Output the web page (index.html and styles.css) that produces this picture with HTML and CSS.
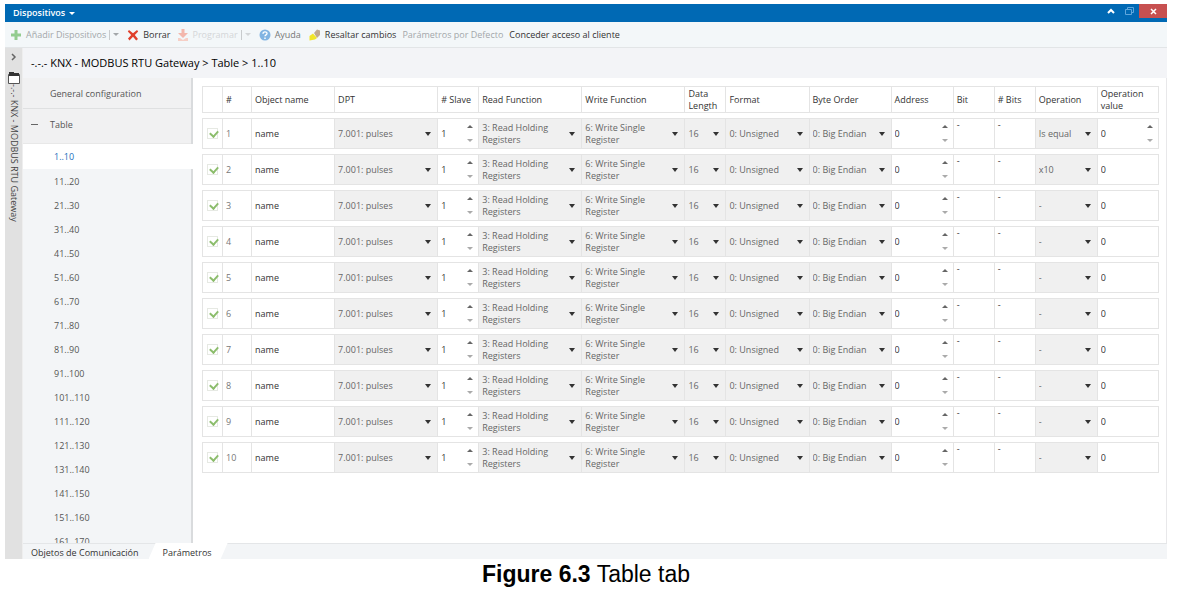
FILE: index.html
```
<!DOCTYPE html>
<html lang="es">
<head>
    <meta charset="UTF-8">
    <meta name="viewport" content="width=device-width, initial-scale=1.0">
    <title>KNX - MODBUS RTU Gateway</title>
    <link rel="stylesheet" href="styles.css">
</head>
<body>
    <figure class="figure">
        <div class="window">
            <header class="titlebar">
                <button class="title-menu">Dispositivos <span class="caret"></span></button>
                <div class="window-buttons">
                    <button aria-label="Contraer">
                        <svg width="8" height="6" viewBox="0 0 8 6"><path d="M1 5 L4 2 L7 5" fill="none" stroke="#fff" stroke-width="2"/></svg>
                    </button>
                    <button aria-label="Restaurar">
                        <svg width="9" height="8" viewBox="0 0 9 8"><path d="M2.5 2V.5h6v5H7M.5 2.5h6v5h-6z" fill="none" stroke="#5fa6dc"/></svg>
                    </button>
                    <button class="close" aria-label="Cerrar">
                        <svg width="7" height="7" viewBox="0 0 7 7"><path d="M1 1l5 5M6 1L1 6" stroke="#fff" stroke-width="1.5"/></svg>
                    </button>
                </div>
            </header>

            <div class="toolbar">
                <button class="tool add" disabled>
                    <svg width="12" height="12" viewBox="0 0 12 12"><path d="M4.5 1h3v3.500H11v3H7.500V11h-3V7.500H1v-3h3.500z" fill="#93cc8f"/></svg>
                    Añadir Dispositivos
                </button>
                <button class="tool-more" aria-label="Más opciones de añadir" disabled><span class="caret"></span></button>
                <button class="tool delete">
                    <svg width="12" height="12" viewBox="0 0 12 12"><path d="M2 1l4 3.200L10 1l1.200 1.500L7.800 6l3.200 4-1.800 1.400L6 7.800l-3.500 3.600L1 9.500 4.200 6 .8 2.500z" fill="#e0402c"/></svg>
                    Borrar
                </button>
                <button class="tool program" disabled>
                    <svg width="12" height="12" viewBox="0 0 12 12"><path d="M4.500 0h3v4H11L6 9 1 4h3.500z" fill="#f3b7ac"/><path d="M1 9h2l3 2 3-2h2v3H1z" fill="#f6cfc6"/></svg>
                    Programar
                </button>
                <button class="tool-more faint" aria-label="Más opciones de programar" disabled><span class="caret"></span></button>
                <button class="tool help">
                    <svg width="12" height="12" viewBox="0 0 12 12"><circle cx="6" cy="6" r="5.500" fill="#82b4e2"/><path d="M4 4.800C4 2.300 8 2.300 8 4.500 8 6 6 5.800 6 7.300M6 8.500v1.400" fill="none" stroke="#fff" stroke-width="1.400"/></svg>
                    Ayuda
                </button>
                <button class="tool highlight">
                    <svg width="12" height="12" viewBox="0 0 12 12"><path d="M5 4l3-3.500 3 1V6L8 9z" fill="#c0a98f"/><path d="M4 4.500L8 9l-2 1.500L.5 11.500V7z" fill="#f1e529"/></svg>
                    Resaltar cambios
                </button>
                <button class="tool defaults" disabled>Parámetros por Defecto</button>
                <button class="tool">Conceder acceso al cliente</button>
            </div>

            <div class="workspace">
                <aside class="rail">
                    <button class="expand" aria-label="Expandir">
                        <svg width="6" height="8" viewBox="0 0 6 8"><path d="M1 1l3 3-3 3" fill="none" stroke="#666" stroke-width="1.500"/></svg>
                    </button>
                    <svg class="device" width="12" height="12" viewBox="0 0 12 12"><path d="M.5 2.500h11v9H.5z" fill="#fff" stroke="#555"/><path d="M1 0h5v1h5v3H1z" fill="#333"/></svg>
                    <span class="rail-text">-.-.- KNX - MODBUS RTU Gateway</span>
                </aside>

                <main class="editor">
                    <h1 class="crumbs">-.-.- KNX - MODBUS RTU Gateway &gt; Table &gt; 1..10</h1>

                    <div class="panes">
                        <nav class="sidebar">
                            <a class="section" href="#general">General configuration</a>
                            <a class="section open" href="#table">Table</a>
                            <ul class="pages" id="pages"></ul>
                        </nav>

                        <section class="params">
                            <table>
                                <colgroup>
                                    <col class="w20"><col class="w29"><col class="w83"><col class="w103"><col class="w41">
                                    <col class="w103"><col class="w103"><col class="w41"><col class="w83"><col class="w82">
                                    <col class="w62"><col class="w41"><col class="w41"><col class="w62"><col class="w62">
                                </colgroup>
                                <thead>
                                    <tr>
                                        <th></th>
                                        <th>#</th>
                                        <th>Object name</th>
                                        <th>DPT</th>
                                        <th># Slave</th>
                                        <th>Read Function</th>
                                        <th>Write Function</th>
                                        <th>Data Length</th>
                                        <th>Format</th>
                                        <th>Byte Order</th>
                                        <th>Address</th>
                                        <th>Bit</th>
                                        <th># Bits</th>
                                        <th>Operation</th>
                                        <th>Operation value</th>
                                    </tr>
                                </thead>
                                <tbody id="rows"></tbody>
                            </table>
                        </section>
                    </div>

                    <footer class="tabs">
                        <a href="#objetos">Objetos de Comunicación</a>
                        <a class="active" href="#parametros">Parámetros</a>
                    </footer>
                </main>
            </div>
        </div>
        <figcaption><b>Figure 6.3</b> Table tab</figcaption>
    </figure>

    <script src="script.js"></script>
</body>
</html>
```
FILE: styles.css
```
* {
    margin: 0;
    padding: 0;
    box-sizing: border-box;
}

body {
    font-family: "Open Sans", "Noto Sans", sans-serif;
    font-size: 9px;
    line-height: 12px;
    color: #333;
    background: #fff;
}

button, input, select {
    font: inherit;
    color: inherit;
    background: none;
    border: 0;
    border-radius: 0;
    outline: 0;
}

a {
    color: inherit;
    text-decoration: none;
}

.figure {
    height: 100vh;
    padding: 4px 12px 10px 5px;
    display: flex;
    flex-direction: column;
}

.window {
    flex: 1;
    min-height: 0;
    display: flex;
    flex-direction: column;
}

figcaption {
    font-family: "Liberation Sans", Arial, sans-serif;
    font-size: 23px;
    line-height: 30px;
    color: #000;
    text-align: center;
}

.caret {
    display: inline-block;
    border: 3px solid transparent;
    border-top-color: currentColor;
    border-bottom: 0;
}

/* title bar */
.titlebar {
    height: 18px;
    display: flex;
    justify-content: space-between;
    background: #0069b4;
    color: #fff;
}

.title-menu {
    padding-left: 8px;
    display: flex;
    align-items: center;
    gap: 4px;
    font-weight: 600;
}

.window-buttons {
    display: flex;
    align-items: flex-start;
}

.window-buttons button {
    width: 19px;
    height: 14px;
    display: flex;
    align-items: center;
    justify-content: center;
}

.window-buttons .close {
    width: 28px;
    background: #c75050;
}

/* toolbar */
.toolbar {
    height: 26px;
    padding-left: 5px;
    display: flex;
    align-items: center;
    background: #f3f7f9;
    border-bottom: 1px solid #e2e5e7;
}

.tool {
    display: flex;
    align-items: center;
    gap: 4px;
    margin-right: 6px;
    white-space: nowrap;
}

.tool:disabled,
.tool-more:disabled {
    color: #a3a7aa;
}

.tool.program:disabled,
.tool-more.faint {
    color: #d3d6d8;
}

.tool.add,
.tool.program {
    margin-right: 3px;
}

.tool.help {
    color: #777;
    margin-right: 8px;
}

.tool-more {
    height: 10px;
    padding-left: 3px;
    margin-right: 8px;
    display: flex;
    align-items: center;
    border-left: 1px solid #c8cbcd;
}

.workspace {
    flex: 1;
    min-height: 0;
    display: flex;
}

/* collapsed device rail */
.rail {
    width: 17px;
    display: flex;
    flex-direction: column;
    align-items: center;
    background: #e1e1e1;
}

.expand {
    height: 24px;
    padding-bottom: 4px;
}

.device {
    flex: none;
}

.rail-text {
    writing-mode: vertical-rl;
    color: #444;
    white-space: nowrap;
}

.editor {
    flex: 1;
    min-width: 0;
    display: flex;
    flex-direction: column;
    border-left: 1px solid #eee;
}

.crumbs {
    padding: 8px;
    font-size: 11px;
    line-height: 14px;
    font-weight: 500;
    color: #000;
    background: #f3f4f7;
    white-space: nowrap;
}

.panes {
    flex: 1;
    min-height: 0;
    display: flex;
    border-right: 1px solid #e8e8ea;
}

/* page list */
.sidebar {
    width: 170px;
    overflow: hidden;
    background: linear-gradient(to right, #f3f5f7 168px, #d9dbdd 168px);
}

.section {
    display: block;
    height: 31px;
    margin-right: 2px;
    padding-left: 27px;
    line-height: 32px;
    color: #555;
    background: #f1f1f2;
    border-bottom: 1px solid #dfe0e1;
}

.section.open {
    height: 35px;
    padding-left: 8px;
    border-bottom-color: #e8e8e8;
}

.section.open::before {
    content: "";
    display: inline-block;
    width: 7px;
    height: 1px;
    margin-right: 12px;
    vertical-align: 3px;
    background: #666;
}

.pages {
    list-style: none;
}

.pages a {
    display: block;
    height: 24px;
    padding-left: 31px;
    line-height: 26px;
    color: #555;
}

.pages .current {
    height: 25px;
    font-weight: 500;
    color: #1c6fbc;
    background: #fff;
}

/* parameter table */
.params {
    flex: 1;
    min-width: 0;
    padding: 3px 7px 0 9px;
    background: #fff;
}

table {
    width: 100%;
    table-layout: fixed;
    border-collapse: separate;
    border-spacing: 0 5px;
}

.w20 { width: 20px; }
.w29 { width: 29px; }
.w41 { width: 41px; }
.w62 { width: 62px; }
.w82 { width: 82px; }
.w83 { width: 83px; }
.w103 { width: 103px; }

th, td {
    border: 1px solid #e4e4e4;
    border-right-width: 0;
    text-align: left;
}

th:last-child,
td:last-child {
    border-right-width: 1px;
}

th {
    height: 27px;
    padding: 0 3px;
    font-weight: 400;
}

td {
    height: 31px;
}

.number {
    padding-left: 3px;
    color: #777;
}

.check {
    display: block;
    position: relative;
    width: 11px;
    height: 11px;
    margin: 0 auto;
    appearance: none;
    border: 1px solid #e6e9e3;
}

.check:checked::after {
    content: "";
    position: absolute;
    left: 3px;
    top: 0;
    width: 4px;
    height: 6px;
    border: solid #8cbd6c;
    border-width: 0 2px 2px 0;
    transform: rotate(42deg);
}

.text {
    display: block;
    width: 100%;
    height: 29px;
    padding-left: 3px;
    appearance: textfield;
}

.text::-webkit-inner-spin-button {
    appearance: none;
}

.spin {
    display: flex;
}

.spin .steps {
    flex: none;
    width: 16px;
    display: flex;
    flex-direction: column;
}

.spin button {
    flex: 1;
    display: flex;
    align-items: center;
    justify-content: center;
}

.spin button::before {
    content: "";
    border: 3px solid transparent;
    border-bottom-color: #666;
    border-top: 0;
}

.spin .down::before {
    border-top: 3px solid #aaa;
    border-bottom: 0;
}

.spin .text {
    flex: 1;
    min-width: 0;
}

.pick {
    position: relative;
    height: 29px;
    display: flex;
    align-items: center;
    background: #f0f0f0;
    color: #666;
}

.pick select {
    flex: 1;
    min-width: 0;
    min-height: 0;
    padding: 0 14px 0 3px;
    appearance: none;
    appearance: base-select;
    white-space: normal;
    text-align: left;
}

.pick select::picker-icon {
    display: none;
}

.pick::after {
    content: "";
    position: absolute;
    right: 6px;
    top: 13px;
    border: 3px solid transparent;
    border-top: 4px solid #333;
    border-bottom: 0;
    pointer-events: none;
}

.unused {
    padding-left: 3px;
    vertical-align: top;
}

/* bottom tabs */
.tabs {
    height: 16px;
    display: flex;
    background: #f3f5f7;
    border-top: 1px solid #e4e6e8;
}

.tabs a {
    padding: 3px 10px 0 8px;
}

.tabs .active {
    margin-top: -1px;
    padding: 4px 16px 0 14px;
    background: #fff;
    clip-path: polygon(7px 0, 100% 0, calc(100% - 7px) 100%, 0 100%);
}
```
FILE: script.js
```
// Page list
const pages = document.getElementById('pages')
for (let i = 0; i < 17; i++) {
    const name = `${i * 10 + 1}..${i * 10 + 10}`
    pages.innerHTML += `<li><a href="#p${i}" class="${i === 0 ? 'current' : ''}">${name}</a></li>`
}

function pick(label, value) {
    return `<td><div class="pick"><select aria-label="${label}"><option>${value}</option></select></div></td>`
}

function spin(label, value) {
    return `<td><div class="spin">
        <input class="text" type="number" aria-label="${label}" value="${value}">
        <span class="steps">
            <button class="up" aria-label="${label} +"></button>
            <button class="down" aria-label="${label} -"></button>
        </span>
    </div></td>`
}

function text(label, value) {
    return `<td><input class="text" type="text" aria-label="${label}" value="${value}"></td>`
}

// Parameter rows
const operations = ['Is equal', 'x10']
const rows = document.getElementById('rows')
for (let n = 1; n <= 10; n++) {
    rows.innerHTML += `<tr>
        <td><input class="check" type="checkbox" aria-label="Enable ${n}" checked></td>
        <td class="number">${n}</td>
        ${text('Object name', 'name')}
        ${pick('DPT', '7.001: pulses')}
        ${spin('Slave', 1)}
        ${pick('Read Function', '3: Read Holding Registers')}
        ${pick('Write Function', '6: Write Single Register')}
        ${pick('Data Length', '16')}
        ${pick('Format', '0: Unsigned')}
        ${pick('Byte Order', '0: Big Endian')}
        ${spin('Address', 0)}
        <td class="unused">-</td>
        <td class="unused">-</td>
        ${pick('Operation', operations[n - 1] || '-')}
        ${n === 1 ? spin('Operation value', 0) : text('Operation value', 0)}
    </tr>`
}

// Step buttons
rows.addEventListener('click', (e) => {
    const button = e.target.closest('.steps button')
    if (!button) return
    const input = button.closest('.spin').querySelector('input')
    if (button.classList.contains('up')) {
        input.stepUp()
    } else {
        input.stepDown()
    }
})
```
